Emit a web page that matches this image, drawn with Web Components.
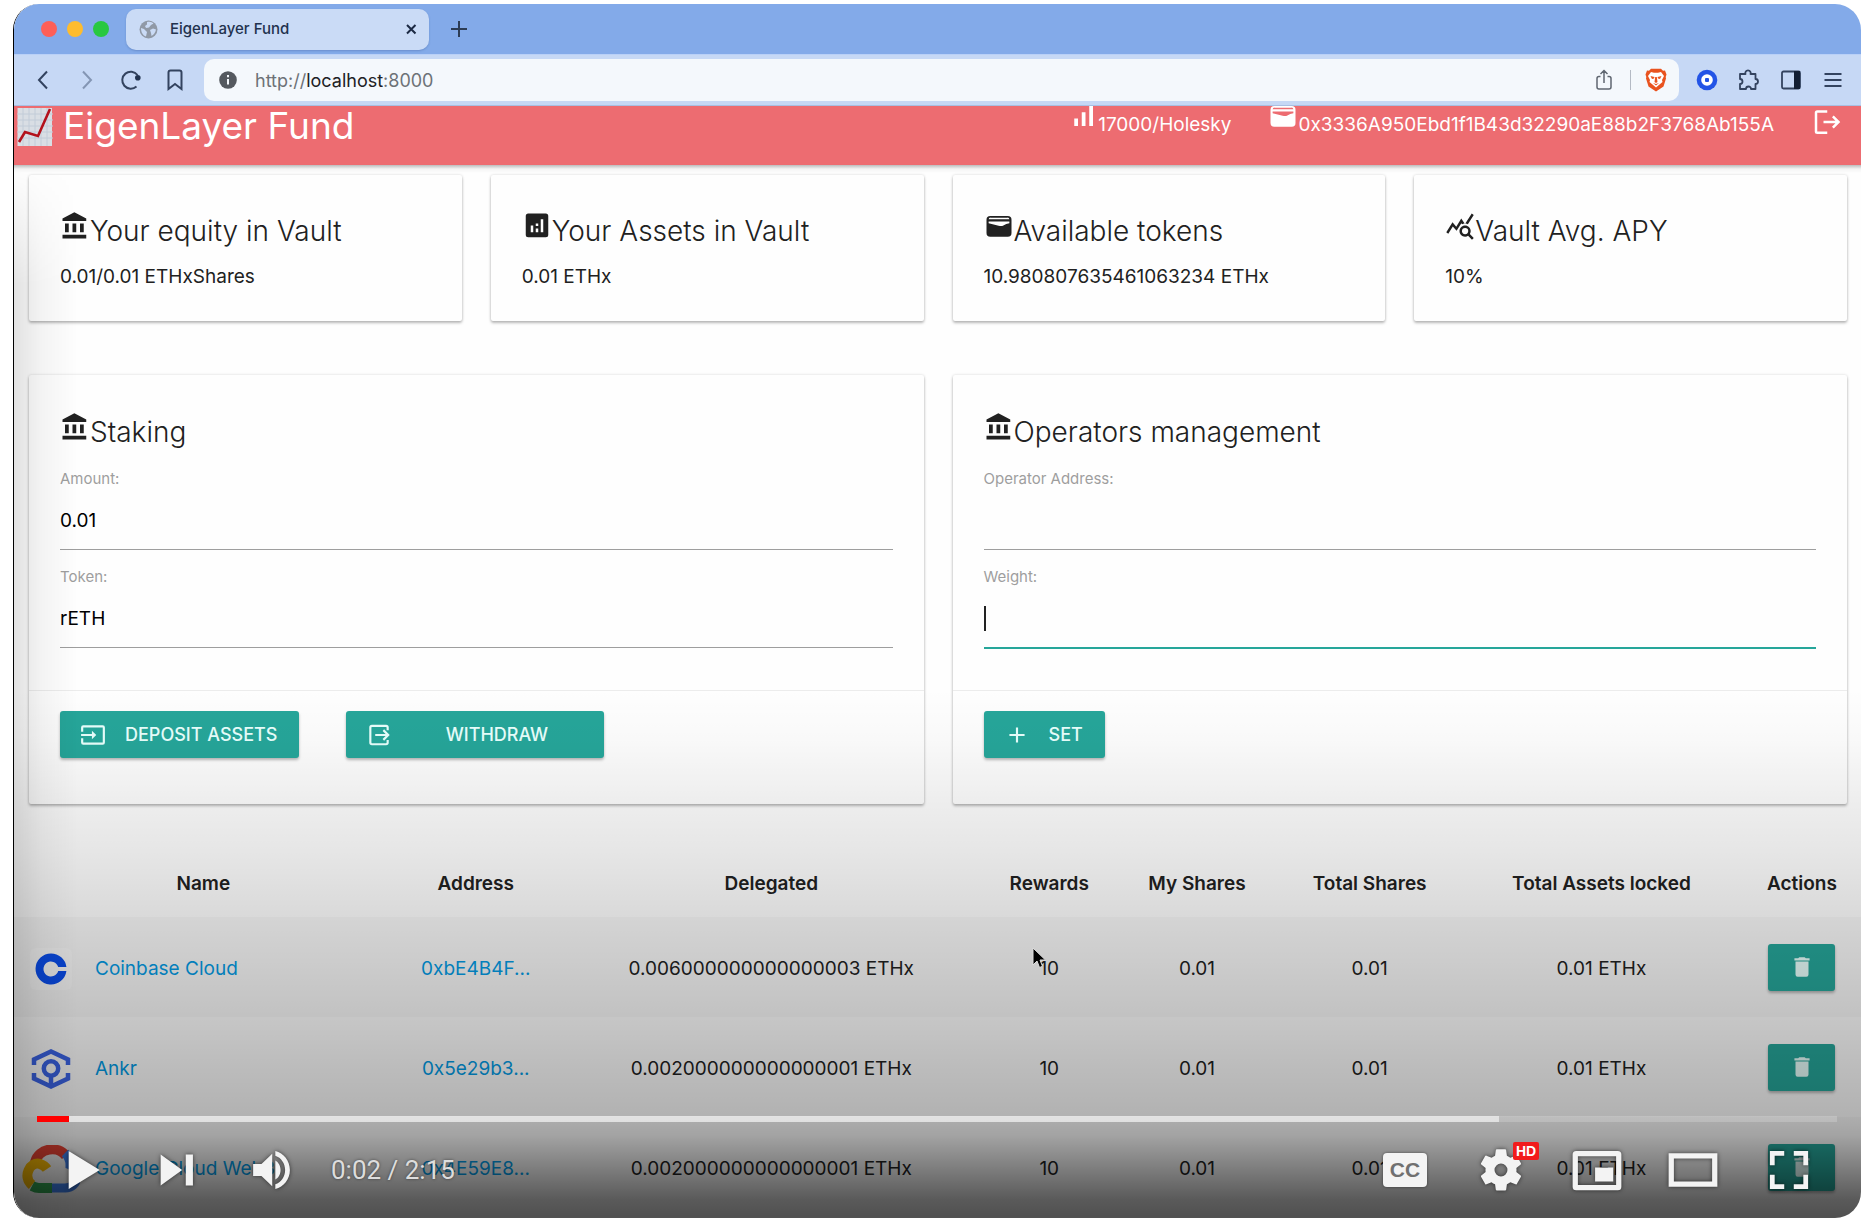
<!DOCTYPE html>
<html lang="en">
<head>
<meta charset="utf-8">
<meta name="viewport" content="width=device-width, initial-scale=1">
<title>EigenLayer Fund</title>
<style>
  body {
    margin: 0;
    padding: 4px 13px 8px;
    background: #fff;
    color: #212121;
    font: 400 19px/30px Inter, "Liberation Sans", sans-serif;
  }
</style>
</head>
<body>
<video-player>
  <browser-window>
    <fund-header></fund-header>
    <fund-dashboard></fund-dashboard>
  </browser-window>
</video-player>

<script>
const ICONS = {
  bank: '<path d="M4 10v7h3v-7H4zm6 0v7h3v-7h-3zM2 22h19v-3H2v3zm14-12v7h3v-7h-3zM11.5 1L2 6v2h19V6l-9.5-5z"/>',
  chart: '<path fill-rule="evenodd" d="M5 2h14a2 2 0 0 1 2 2v15a2 2 0 0 1-2 2H5a2 2 0 0 1-2-2V4a2 2 0 0 1 2-2zM7 11.500v5.500h2v-5.500zM11 14v3h2v-3zM11 10v2h2v-2zM15 6.500V17h2V6.500z"/>',
  wallet: '<path fill-rule="evenodd" d="M5 4h14a3 3 0 0 1 3 3v10.500a3 3 0 0 1-3 3H5a3 3 0 0 1-3-3V7a3 3 0 0 1 3-3zM5.200 5.300A1.500 1.500 0 0 0 3.700 6.600h16.600a1.500 1.500 0 0 0-1.500-1.300zM3.700 8.300v1.500l8 1.900c1.500.400 2.600.500 3.800-.200 1.500-.900 3-1.500 4.800-1.800V8.300z"/>',
  stats: '<path d="M19.880 18.470c.440-.700.700-1.510.700-2.390 0-2.490-2.010-4.500-4.500-4.500s-4.500 2.010-4.500 4.500 2.010 4.500 4.490 4.500c.880 0 1.700-.260 2.390-.700L21.580 23 23 21.580zM16.080 18.580a2.500 2.500 0 1 1 0-5 2.500 2.500 0 0 1 0 5zM15.720 10.080c-.740.020-1.450.180-2.100.450l-.550-.830-3.800 6.180-3.010-3.520-3.630 5.810L1 17l5-8 3 3.500L13 6zM18.310 10.580c-.640-.280-1.330-.450-2.050-.490L21.380 2 23 3.180z"/>',
  signal: '<path d="M17 4h3v16h-3zM5 14h3v6H5zM11 9h3v11h-3z"/>',
  input: '<path d="M21 3H3a2 2 0 0 0-2 2v4h2V5h18v14H3v-4H1v4a2 2 0 0 0 2 2h18a2 2 0 0 0 2-2V5a2 2 0 0 0-2-2zM11 16l4-4-4-4v3H1v2h10z"/>',
  output: '<path fill="none" stroke="currentColor" stroke-width="2" d="M20 7.500V5a1.500 1.500 0 0 0-1.500-1.500h-13A1.500 1.500 0 0 0 4 5v14a1.500 1.500 0 0 0 1.500 1.500h13A1.500 1.500 0 0 0 20 19v-2.500M8.500 12H20M16 7.500l4.500 4.500-4.500 4.500"/>',
  plus: '<path d="M19 13h-6v6h-2v-6H5v-2h6V5h2v6h6z"/>',
  trash: '<path d="M6 19a2 2 0 0 0 2 2h8a2 2 0 0 0 2-2V7H6zM19 4h-3.500l-1-1h-5l-1 1H5v2h14z"/>',
  logout: '<path fill="none" stroke="currentColor" stroke-width="2" d="M13 3.500H5a1 1 0 0 0-1 1v15a1 1 0 0 0 1 1h8M10 12h12M17.500 7.500L22 12l-4.500 4.500"/>',
};

const sheet = css => `<style>
  *, *::before, *::after { box-sizing: border-box; }
  button { font: inherit; color: inherit; border: 0; padding: 0; margin: 0; background: none; cursor: pointer; }
  a { color: #039be5; text-decoration: none; }
  svg { display: block; flex: none; }
  ${css}</style>`;

const define = (name, css, html) => customElements.define(name, class extends HTMLElement {
  constructor() {
    super();
    this.attachShadow({ mode: 'open' });
  }
  connectedCallback() {
    const markup = typeof html === 'function' ? html(this) : html;
    this.shadowRoot.innerHTML = sheet(css) + markup;
  }
});

/* A 24-unit glyph, sized by its size attribute */
define('md-icon', `
  :host { display: inline-block; }
  svg { fill: currentColor; }`,
  el => {
    const s = el.getAttribute('size') || 30;
    return `<svg width="${s}" height="${s}" viewBox="0 0 24 24" aria-hidden="true">${ICONS[el.getAttribute('name')]}</svg>`;
  });

/* ---------- browser chrome ---------- */
define('tab-strip', `
  :host { display: flex; align-items: center; height: 50px; background: #83aae9; padding-left: 27px; }
  .lights { display: flex; gap: 10px; margin-right: 17px; }
  .lights i { width: 16px; height: 16px; border-radius: 50%; }
  .tab { display: flex; align-items: center; width: 303px; height: 41px; padding: 0 10px 0 13px; border-radius: 10px; background: #cadbf6; box-shadow: 0 1px 2px rgba(50,80,140,.3); color: #22324e; font-size: 15px; font-weight: 500; }
  .tab span { flex: 1; padding-left: 12px; }
  .tab button { width: 16px; height: 16px; }
  .new { margin-left: 22px; color: #2c3c55; }`,
  `<div class="lights"><i style="background:#fe5f57"></i><i style="background:#febc2e"></i><i style="background:#28c840"></i></div>
  <div class="tab">
    <svg width="19" height="19" viewBox="0 0 19 19"><circle cx="9.500" cy="9.500" r="9" fill="#9099a6"/><path fill="#cadbf6" d="M8 2c3-.800 5 0 6.500 1.500L12 5l-2 2.500-3 .500-1-2 2-1.500zM2 8l3 1 3 3-1 4.500C4 15.500 2 12.500 2 8zM11 10l3-1.500 3 1c-.500 3-2 5-4.500 6.500L12 13z"/></svg>
    <span>EigenLayer Fund</span>
    <button aria-label="Close tab"><svg width="16" height="16" viewBox="0 0 16 16"><path d="M4 4l8.500 8.500M12.500 4L4 12.500" stroke="#1c2a44" stroke-width="2"/></svg></button>
  </div>
  <button class="new" aria-label="New tab"><svg width="16" height="16" viewBox="0 0 16 16"><path d="M8 0v16M0 8h16" stroke="currentColor" stroke-width="2"/></svg></button>`);

define('address-bar', `
  :host { display: flex; align-items: center; height: 52px; padding: 0 7px; background: #c6d8f5; border-top: 1px solid #b9d0f7; border-bottom: 1px solid #a9bfe2; color: #33435f; }
  .nav button, .ext button { display: flex; justify-content: center; align-items: center; height: 40px; }
  .nav, .ext { display: flex; }
  .nav button { width: 44px; }
  .ext button { width: 42px; }
  .ext { margin-left: 7px; }
  .box { flex: 1; display: flex; align-items: center; height: 42px; margin-left: 7px; padding: 0 12px 0 15px; border-radius: 10px; background: #f4f8fc; }
  .url { flex: 1; padding: 1px 0 0 18px; font-size: 18px; color: #6d7277; }
  b { font-weight: 400; color: #202124; }
  .rule { width: 1px; height: 20px; margin: 0 14px 0 16px; background: #b4bac4; }`,
  `<div class="nav">
    <button aria-label="Back"><svg width="24" height="24" viewBox="0 0 24 24" fill="none" stroke="currentColor" stroke-width="2"><path d="M16 3.500L8 12l8 8.500"/></svg></button>
    <button aria-label="Forward"><svg width="24" height="24" viewBox="0 0 24 24" fill="none" stroke="#8496b4" stroke-width="2"><path d="M8 3.500l8 8.500-8 8.500"/></svg></button>
    <button aria-label="Reload"><svg width="24" height="24" viewBox="0 0 24 24"><path d="M17.500 18.500A8.500 8.500 0 1 1 18.500 7" fill="none" stroke="currentColor" stroke-width="2"/><circle cx="18.800" cy="9.800" r="2.800" fill="#22324e"/></svg></button>
    <button aria-label="Bookmark"><svg width="24" height="24" viewBox="0 0 24 24" fill="none" stroke="currentColor" stroke-width="2"><path d="M5.500 4.500a2 2 0 0 1 2-2h9a2 2 0 0 1 2 2v16.500L12 16l-6.500 5z"/></svg></button>
  </div>
  <div class="box">
    <svg width="18" height="18" viewBox="0 0 18 18"><circle cx="9" cy="9" r="8.800" fill="#54595f"/><path d="M9 4v2.200M9 8v5.500" stroke="#f4f8fc" stroke-width="2"/></svg>
    <span class="url">http://<b>localhost</b>:8000</span>
    <svg width="20" height="22" viewBox="0 0 20 22" fill="none" stroke="#5f6670" stroke-width="1.500"><path d="M6.500 7.500H5a2 2 0 0 0-2 2V18a2 2 0 0 0 2 2h10a2 2 0 0 0 2-2V9.500a2 2 0 0 0-2-2h-1.500M10 14V1.500M6.500 5L10 1.500 13.500 5"/></svg>
    <span class="rule"></span>
    <svg width="22" height="24" viewBox="0 0 22 24"><path fill="#e9531f" d="M6 .800h10l2 2 2-.200 1.500 4-.800 2.400.300 1.500-2.500 8L11 23.500 3.500 18.500 1 10.500 1.300 9 .500 6.600l1.500-4 2 .200z"/><path fill="#fff" d="M6 4l3 .800h4L16 4l3 4-2 4 .500 2-3 2.500L11 19.500 7.500 16.500l-3-2.500.500-2-2-4z"/><path fill="#e9531f" d="M5.500 8l4 1-.500 1.500-2 .500zM16.500 8l-4 1 .500 1.500 2 .500zM10.200 9h1.600l.700 5L11 15l-1.500-1zM8 15l3 1 3-1-3 2.500z"/></svg>
  </div>
  <div class="ext">
    <button aria-label="Wallet extension"><svg width="22" height="22" viewBox="0 0 22 22"><circle cx="11" cy="11" r="10.300" fill="#2354e6"/><circle cx="11" cy="11" r="5.800" fill="#fff"/><rect x="9" y="9" width="4" height="4" rx="1" fill="#2354e6"/></svg></button>
    <button aria-label="Extensions"><svg width="22" height="22" viewBox="0 0 22 22" fill="none" stroke="currentColor" stroke-width="1.800" stroke-linejoin="round"><path d="M2 5h5.500a2.700 2.700 0 1 1 5 0h5v5a2.500 2.500 0 1 1 0 5v5H13a2.500 2.500 0 0 0-5 0H2v-5a2.500 2.500 0 1 0 0-5z"/></svg></button>
    <button aria-label="Sidebar"><svg width="22" height="22" viewBox="0 0 22 22"><rect x="2" y="2.500" width="18" height="17" rx="1.500" fill="none" stroke="currentColor" stroke-width="1.800"/><path d="M14 2h6v18h-6z" fill="#131f33"/></svg></button>
    <button aria-label="Menu"><svg width="22" height="22" viewBox="0 0 22 22"><path d="M2.500 5h17M2.500 11h17M2.500 17h17" stroke="currentColor" stroke-width="2"/></svg></button>
  </div>`);

/* The toolbar stays above the page, which is scrolled up under it */
define('browser-window', `
  :host { display: block; background: #fefefe; }
  tab-strip, address-bar { position: relative; z-index: 2; }`,
  `<tab-strip></tab-strip><address-bar></address-bar><slot></slot>`);

/* ---------- application ---------- */
define('fund-header', `
  :host { display: flex; align-items: flex-end; height: 59px; position: relative; z-index: 1; background: #ed6c71; }
  nav { flex: 1; display: flex; align-items: center; height: 77px; padding: 0 20px 0 3px; color: #fff; }
  .brand { display: flex; align-items: center; gap: 10px; flex: 1; color: #fff; font-size: 37px; line-height: 40px; }
  .brand span { padding-bottom: 2px; }
  .item { margin-right: 37px; padding-bottom: 4px; white-space: nowrap; }
  .item md-icon { margin-top: -12px; }`,
  `<nav>
    <a class="brand" href="#">
      <svg width="36" height="38" viewBox="0 0 36 38"><rect x=".500" y="0" width="34.500" height="38" fill="#d9dee4"/><path d="M0 6h36M0 12h36M0 18h36M0 24h36M0 30h36M6 0v38M12 0v38M18 0v38M24 0v38M30 0v38" stroke="#c2ccd8" stroke-width="1"/><path d="M2 34l6-10 13 4L33 1" fill="none" stroke="#b3121c" stroke-width="2.600"/></svg>
      <span>EigenLayer Fund</span>
    </a>
    <span class="item"><md-icon name="signal"></md-icon>17000/Holesky</span>
    <span class="item"><md-icon name="wallet"></md-icon>0x3336A950Ebd1f1B43d32290aE88b2F3768Ab155A</span>
    <button aria-label="Log out"><md-icon name="logout"></md-icon></button>
  </nav>`);

define('fund-card', `
  :host { display: flex; flex-direction: column; min-width: 0; padding: 36px 31px 29px; background: #fefefe; border-radius: 2px; box-shadow: 0 2px 3px rgba(0,0,0,.26), 0 0 3px rgba(0,0,0,.14); }
  :host([form]) { padding-top: 37px; padding-bottom: 46px; }
  h2 { margin: 0 0 11px; font-size: 28px; line-height: 40px; font-weight: 300; white-space: nowrap; }
  :host([form]) h2 { margin-bottom: 17px; }
  .actions { display: flex; gap: 47px; margin: 25px -31px 0; padding: 20px 31px 0; border-top: 1px solid #ececec; }
  :host(:not([form])) .actions { display: none; }`,
  el => `<h2><md-icon name="${el.getAttribute('icon')}"></md-icon>${el.getAttribute('heading')}</h2>
  <slot></slot><div class="actions"><slot name="action"></slot></div>`);

define('text-field', `
  :host { display: block; margin-bottom: 17px; }
  label { display: block; margin-bottom: 1px; font-size: 15px; line-height: 20px; color: #9e9e9e; }
  input { display: block; width: 100%; height: 60px; padding: 2px 0 0; border: 0; border-bottom: 1px solid #9e9e9e; outline: 0; border-radius: 0; background: transparent; color: #000; font: inherit; }
  :host([active]) input { border-color: #26a69a; box-shadow: 0 1px 0 #26a69a; background: linear-gradient(#222, #222) 0 18px / 2px 25px no-repeat; }`,
  el => `<label for="f">${el.getAttribute('label')}</label><input id="f" type="text" value="${el.getAttribute('value') || ''}">`);

define('action-button', `
  :host { display: block; }
  button { display: flex; align-items: center; gap: 19px; height: 47px; padding: 0 22px 0 20px; border-radius: 3px; background: #26a69a; color: #e8fffc; font-size: 18px; font-weight: 500; box-shadow: 0 2px 3px rgba(0,0,0,.28); }
  :host([spread]) button { width: 258px; }
  :host([spread]) span { flex: 1; text-align: center; }
  :host([square]) button { width: 67px; padding: 0; justify-content: center; }`,
  el => el.hasAttribute('square')
    ? `<button aria-label="${el.getAttribute('label')}"><md-icon name="${el.getAttribute('icon')}" size="26"></md-icon></button>`
    : `<button><md-icon name="${el.getAttribute('icon')}" size="26"></md-icon><span>${el.getAttribute('label')}</span></button>`);

const LOGOS = {
  coinbase: '<svg width="42" height="42" viewBox="0 0 42 42"><rect width="42" height="42" rx="6" fill="#fff" fill-opacity=".55"/><path fill="#0b4ff0" d="M21 5.500a15.500 15.500 0 1 0 15.400 17.500H28.200a7.500 7.500 0 1 1 0-4h8.200A15.500 15.500 0 0 0 21 5.500z"/></svg>',
  ankr: '<svg width="42" height="42" viewBox="0 0 42 42" fill="none" stroke="#3d66ea" stroke-width="4.500"><path d="M4 17v-5.500L21 3.500l17 8V17M4 25v5.500l17 8 17-8V25"/><circle cx="21" cy="20.500" r="7.200"/><path d="M21 28v10"/></svg>',
  google: '<svg width="58" height="48" viewBox="0 0 58 48"><path d="M13 17C17 3 36 0 44 11" fill="none" stroke="#ea4335" stroke-width="10"/><path d="M43 8c4 4 5 8 5 12 11 5 9 23-5 23H29" fill="none" stroke="#4285f4" stroke-width="9"/><path d="M30 43H17c-3 0-5-1-7-2" fill="none" stroke="#34a853" stroke-width="10"/><path d="M10 40C0 32 8 16 18 19c3 1 5 2 7 5" fill="none" stroke="#fbbc05" stroke-width="10"/></svg>',
};

define('operator-table', `
  :host { display: block; margin-top: 47px; }
  table { width: 100%; border-collapse: collapse; table-layout: fixed; }
  th { height: 66px; padding: 0; font-weight: 600; white-space: nowrap; }
  td { height: 100px; padding: 3px 0 0; text-align: center; white-space: nowrap; }
  tbody tr:nth-child(odd) { background: #f8f8f8; }
  .name { display: flex; align-items: center; padding-left: 8px; }
  .logo { display: flex; justify-content: center; width: 58px; margin-right: 15px; }
  .end { padding: 0; }
  action-button { display: inline-block; vertical-align: middle; }`,
  () => {
    const rows = [
      ['coinbase', 'Coinbase Cloud', '0xbE4B4F...', '0.006000000000000003 ETHx'],
      ['ankr', 'Ankr', '0x5e29b3...', '0.002000000000000001 ETHx'],
      ['google', 'Google Cloud Web3', '0x4E59E8...', '0.002000000000000001 ETHx'],
    ];
    const widths = [20.5, 9, 23, 7.1, 8.9, 9.8, 15.3, 6.4];
    const heads = ['Name', 'Address', 'Delegated', 'Rewards', 'My Shares', 'Total Shares', 'Total Assets locked', 'Actions'];
    return `<table>
      <colgroup>${widths.map(w => `<col style="width:${w}%">`).join('')}</colgroup>
      <thead><tr>${heads.map(h => `<th scope="col">${h}</th>`).join('')}</tr></thead>
      <tbody>${rows.map(([logo, name, addr, amount]) => `<tr>
        <td><div class="name"><span class="logo">${LOGOS[logo]}</span><a href="#">${name}</a></div></td>
        <td><a href="#">${addr}</a></td><td>${amount}</td><td>10</td><td>0.01</td><td>0.01</td><td>0.01 ETHx</td>
        <td class="end"><action-button square icon="trash" label="Remove ${name}"></action-button></td></tr>`).join('')}</tbody>
    </table>`;
  });

define('fund-dashboard', `
  :host { display: block; position: relative; padding: 10px 0 1px; background: linear-gradient(rgba(0,0,0,.26), rgba(0,0,0,.04) 4px, transparent 8px); }
  :host::after { content: ""; position: absolute; left: 0; top: 0; bottom: 0; width: 64px; background: linear-gradient(90deg, rgba(0,0,0,.11), rgba(0,0,0,.04) 45%, transparent); mask: linear-gradient(transparent, #000 120px); pointer-events: none; }
  .row { display: grid; gap: 29px; padding: 0 14px 0 15px; }
  .stats { grid-template-columns: repeat(4, 1fr); }
  .forms { grid-template-columns: repeat(2, 1fr); margin-top: 54px; }`,
  `<div class="row stats">
    <fund-card icon="bank" heading="Your equity in Vault">0.01/0.01 ETHxShares</fund-card>
    <fund-card icon="chart" heading="Your Assets in Vault">0.01 ETHx</fund-card>
    <fund-card icon="wallet" heading="Available tokens">10.980807635461063234 ETHx</fund-card>
    <fund-card icon="stats" heading="Vault Avg. APY">10%</fund-card>
  </div>
  <div class="row forms">
    <fund-card form icon="bank" heading="Staking">
      <text-field label="Amount:" value="0.01"></text-field>
      <text-field label="Token:" value="rETH"></text-field>
      <action-button slot="action" icon="input" label="DEPOSIT ASSETS"></action-button>
      <action-button slot="action" spread icon="output" label="WITHDRAW"></action-button>
    </fund-card>
    <fund-card form icon="bank" heading="Operators management">
      <text-field label="Operator Address:"></text-field>
      <text-field label="Weight:" active></text-field>
      <action-button slot="action" icon="plus" label="SET"></action-button>
    </fund-card>
  </div>
  <operator-table></operator-table>`);

/* ---------- player ---------- */
define('player-controls', `
  :host { display: flex; flex-direction: column; justify-content: flex-end; padding: 0 24px 0 23px;
    background: linear-gradient(to top, rgba(0,0,0,.68), rgba(0,0,0,.64) 18px, rgba(0,0,0,.50) 48px, rgba(0,0,0,.34) 83px, rgba(0,0,0,.30) 101px, rgba(0,0,0,.22) 201px, rgba(0,0,0,.145) 301px, rgba(0,0,0,.095) 368px, rgba(0,0,0,.065) 414px, rgba(0,0,0,.02) 480px, transparent 530px); }
  .bar { display: flex; height: 6px; background: rgba(255,255,255,.2); }
  .bar i { width: 1.800%; background: #f00; }
  .bar b { width: 79.400%; background: rgba(255,255,255,.55); }
  .row { display: flex; align-items: center; height: 96px; }
  .row svg { filter: drop-shadow(0 0 2px rgba(0,0,0,.6)); fill: #f3f3f3; }
  button { display: flex; justify-content: center; align-items: center; position: relative; width: 96px; height: 96px; }
  .left button { width: 92px; }
  .left .vol { width: 96px; margin-left: 8px; }
  .left, .right { display: flex; align-items: center; }
  .left { flex: 1; }
  time { margin-left: 6px; font: 400 26px/40px Roboto, sans-serif; color: #ddd; text-shadow: 0 0 3px rgba(0,0,0,.5); }
  .cc { display: flex; align-items: center; justify-content: center; width: 44px; height: 34px; border-radius: 4px; background: #f3f3f3; box-shadow: 0 0 3px rgba(0,0,0,.5); color: #707070; font: 700 21px/34px "Liberation Sans", sans-serif; }
  .hd { position: absolute; left: 60px; top: 20px; width: 26px; height: 18px; border-radius: 2px; background: #f21c1c; color: #fff; font: 700 14px/18px "Liberation Sans", sans-serif; text-align: center; }`,
  `<div class="bar"><i></i><b></b></div>
  <div class="row">
    <div class="left">
      <button aria-label="Play"><svg width="86" height="86" viewBox="0 0 36 36"><path d="M12 10v16l13-8z"/></svg></button>
      <button aria-label="Next"><svg width="86" height="86" viewBox="0 0 36 36"><path d="M12 24.500l9-6.500-9-6.500zM22.500 11.500v13h3v-13z"/></svg></button>
      <button class="vol" aria-label="Mute"><svg width="86" height="86" viewBox="0 0 36 36"><path d="M8 20.500h3.500l4.500 4.300V11.200l-4.500 4.300H8zM17.300 14v8c1.300-.700 2.200-2.200 2.200-4s-.900-3.300-2.200-4zM17.300 12c2.400.800 4.100 3.200 4.100 6s-1.700 5.200-4.100 6v2c3.500-.900 6.100-4.100 6.100-8s-2.600-7.100-6.100-8z"/></svg></button>
      <time>0:02 / 2:15</time>
    </div>
    <div class="right">
      <button aria-label="Subtitles"><span class="cc">CC</span></button>
      <button aria-label="Settings"><svg width="86" height="86" viewBox="0 0 36 36"><path fill-rule="evenodd" d="M23.940 18.780c.030-.250.050-.510.050-.780s-.020-.520-.050-.780l1.680-1.320c.150-.120.190-.330.090-.510l-1.600-2.760c-.090-.170-.310-.240-.480-.170l-1.990.800c-.410-.320-.860-.580-1.350-.780l-.300-2.120c-.020-.190-.190-.330-.390-.330h-3.200c-.200 0-.360.140-.390.330l-.300 2.120c-.480.200-.930.470-1.350.780l-1.990-.800c-.180-.070-.390 0-.480.170l-1.600 2.760c-.100.170-.050.390.090.510l1.680 1.320c-.030.250-.050.520-.050.780s.020.520.050.780l-1.680 1.320c-.150.120-.190.330-.090.510l1.600 2.760c.090.170.310.240.480.170l1.990-.800c.410.320.860.580 1.350.780l.300 2.120c.020.190.190.330.390.330h3.200c.200 0 .360-.140.390-.330l.300-2.120c.480-.200.930-.470 1.350-.780l1.990.800c.180.070.390 0 .480-.170l1.600-2.760c.090-.170.050-.390-.090-.510zM18 20.500a2.500 2.500 0 1 1 0-5 2.500 2.500 0 0 1 0 5z" transform="translate(-1.500 -1.500) scale(1.083)"/></svg><span class="hd">HD</span></button>
      <button aria-label="Miniplayer"><svg width="86" height="86" viewBox="0 0 36 36"><path fill-rule="evenodd" d="M9.300 10h17.400A1.500 1.500 0 0 1 28.200 11.500v13.500a1.500 1.500 0 0 1-1.500 1.500H9.300a1.500 1.500 0 0 1-1.500-1.500V11.500A1.500 1.500 0 0 1 9.300 10zM10 12.200v12.100h16V12.200zM17.200 17h7.600v5.800h-7.600z"/></svg></button>
      <button aria-label="Theater mode"><svg width="86" height="86" viewBox="0 0 36 36"><path fill-rule="evenodd" d="M7.800 11h20.400v14H7.800zM10 13.200v9.600h16v-9.600z"/></svg></button>
      <button aria-label="Full screen"><svg width="86" height="86" viewBox="0 0 36 36"><path d="M10 16h2v-4h4v-2h-6zM20 10v2h4v4h2v-6zM24 24h-4v2h6v-6h-2zM12 20h-2v6h6v-2h-4z"/></svg></button>
    </div>
  </div>`);

define('video-player', `
  :host { display: grid; overflow: hidden; position: relative; border-radius: 26px; border-left: 1px solid #000; isolation: isolate; }
  ::slotted(*), player-controls { grid-area: 1 / 1; min-width: 0; }
  player-controls { position: relative; z-index: 2; }
  .pointer { position: absolute; z-index: 3; left: 55.100%; top: 943px; }`,
  `<slot></slot><player-controls></player-controls>
  <svg class="pointer" width="16" height="24" viewBox="0 0 16 24"><path d="M1 1v17l4-4 2.500 6.500 3-1.200L8 13h5.500z" fill="#000" stroke="#ddd" stroke-width="1"/></svg>`);
</script>
</body>
</html>
